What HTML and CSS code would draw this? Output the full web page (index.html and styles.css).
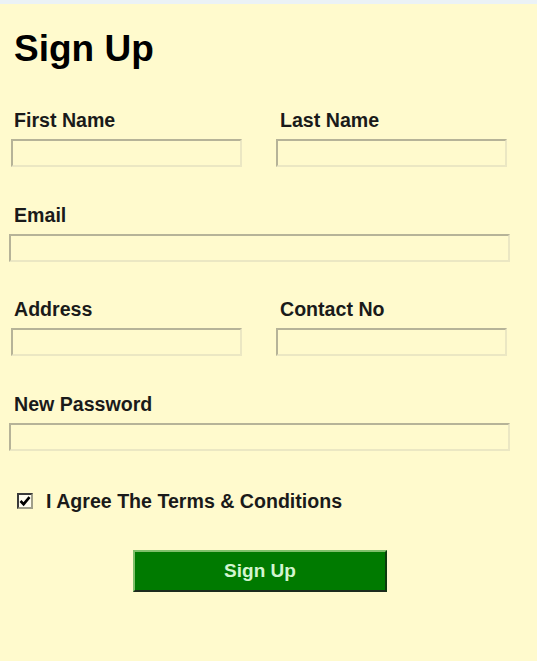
FILE: index.html
```html
<!DOCTYPE html>
<html>
<head>
<meta charset="utf-8">
<link rel="stylesheet" href="styles.css">
</head>
<body>
<div class="topbar"></div>
<main class="page">
  <h1 class="title">Sign Up</h1>
  <form class="form">
    <div class="row">
      <div class="field half">
        <label class="label">First Name</label>
        <input class="input" type="text">
      </div>
      <div class="field half right">
        <label class="label">Last Name</label>
        <input class="input" type="text">
      </div>
    </div>
    <div class="field full">
      <label class="label">Email</label>
      <input class="input" type="text">
    </div>
    <div class="row">
      <div class="field half">
        <label class="label">Address</label>
        <input class="input" type="text">
      </div>
      <div class="field half right">
        <label class="label">Contact No</label>
        <input class="input" type="text">
      </div>
    </div>
    <div class="field full">
      <label class="label">New Password</label>
      <input class="input" type="password">
    </div>
    <div class="agree">
      <span class="check"><svg width="12" height="12" viewBox="0 0 12 12"><path d="M1.5 6 L4.6 9.2 L10.5 2.2" fill="none" stroke="#000" stroke-width="2.6"/></svg></span>
      <span class="agree-text">I Agree The Terms &amp; Conditions</span>
    </div>
    <div class="actions">
      <button class="btn" type="button">Sign Up</button>
    </div>
  </form>
</main>
</body>
</html>
```

FILE: styles.css
```css
html, body {
  margin: 0;
  padding: 0;
  background: #fffacd;
}
body {
  font-family: "Liberation Sans", Arial, sans-serif;
  color: #111;
  width: 537px;
  height: 661px;
  overflow: hidden;
}
.topbar {
  height: 4px;
  background: #ebf2f6;
}
.page {
  padding: 26px 0 0 0;
}
.title {
  margin: 0 0 0 14px;
  font-size: 37px;
  line-height: 37px;
  font-weight: bold;
  color: #000;
}
.form {
  display: flex;
  flex-direction: column;
  gap: 37.5px;
  margin-top: 43px;
}
.row {
  display: flex;
  gap: 34px;
  margin-left: 11px;
}
.field {
  display: flex;
  flex-direction: column;
  gap: 9px;
}
.label {
  font-size: 19.6px;
  line-height: 20px;
  font-weight: bold;
  color: #1a1a1a;
  padding-left: 3px;
}
.right .label {
  padding-left: 4px;
}
.half {
  width: 231px;
}
.full {
  margin-left: 9px;
  width: 501px;
}
.full .label {
  padding-left: 5px;
}
.input {
  box-sizing: border-box;
  height: 28px;
  width: 100%;
  margin: 0;
  background: #fffacd;
  border: 2px solid;
  border-color: #b6b398 #ebe7c3 #ebe7c3 #b6b398;
  outline: none;
  padding: 0 4px;
}
.agree {
  display: flex;
  align-items: center;
  gap: 13px;
  margin-left: 17px;
  margin-top: 3px;
}
.check {
  box-sizing: border-box;
  width: 16px;
  height: 16px;
  border: 2px solid;
  border-color: #3a3a3a #a09f8a #a09f8a #3a3a3a;
  background: #fffdf0;
  display: flex;
  align-items: center;
  justify-content: center;
}
.agree-text {
  font-size: 19.6px;
  line-height: 20px;
  font-weight: bold;
  color: #1a1a1a;
}
.actions {
  display: flex;
  margin-left: 133px;
  margin-top: 1px;
}
.btn {
  box-sizing: border-box;
  width: 254px;
  height: 42px;
  background: #007a00;
  border: 2px solid;
  border-color: #7fbf6a #0d3a0d #1d2a1d #7fbf6a;
  color: #d2f5cf;
  font-family: "Liberation Sans", Arial, sans-serif;
  font-size: 19px;
  font-weight: bold;
  padding: 0;
}
```
